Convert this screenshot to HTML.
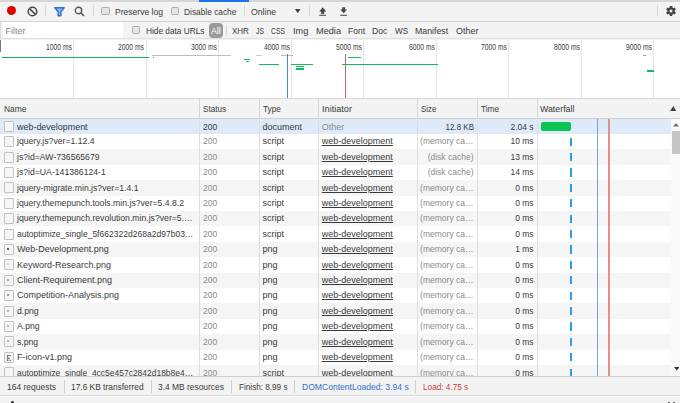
<!DOCTYPE html>
<html><head><meta charset="utf-8"><style>
html,body{margin:0;padding:0;width:680px;height:403px;overflow:hidden;background:#f3f3f3}
body>*{position:absolute}
.t{position:absolute;white-space:nowrap;font-family:"Liberation Sans", sans-serif;}
</style></head><body>
<div style="left:0.00px;top:0.00px;width:680.00px;height:403.00px;background:#f3f3f3;"></div>
<div style="left:0.00px;top:0.00px;width:680.00px;height:1.80px;background:#d6d6d6;"></div>
<div style="left:198.60px;top:0.00px;width:50.80px;height:1.80px;background:#1a73e8;"></div>
<div style="left:0.00px;top:20.50px;width:680.00px;height:1.00px;background:#d3d3d3;"></div>
<div style="left:7.1px;top:6.0px;width:9.2px;height:9.2px;border-radius:50%;background:#e20000"></div>
<svg style="left:27px;top:5.5px" width="11" height="11" viewBox="0 0 11 11"><circle cx="5.5" cy="5.5" r="4.3" fill="none" stroke="#4a4a4a" stroke-width="1.5"/><line x1="2.6" y1="2.6" x2="8.4" y2="8.4" stroke="#4a4a4a" stroke-width="1.5"/></svg>
<div style="left:45.20px;top:5.00px;width:1.00px;height:11.00px;background:#d6d6d6;"></div>
<svg style="left:54px;top:7px" width="11" height="9.5" viewBox="0 0 11 9.5"><path d="M0.8 0.8 H10.2 L6.9 4.7 V8.7 H4.1 V4.7 Z" fill="#86b2f0" stroke="#2f72d6" stroke-width="1.4" stroke-linejoin="round"/></svg>
<svg style="left:74px;top:5.5px" width="11" height="11" viewBox="0 0 11 11"><circle cx="4.5" cy="4.5" r="3.2" fill="none" stroke="#555" stroke-width="1.4"/><line x1="6.8" y1="6.8" x2="10" y2="10" stroke="#555" stroke-width="1.6"/></svg>
<div style="left:93.00px;top:5.00px;width:1.00px;height:11.00px;background:#d6d6d6;"></div>
<div style="left:101.2px;top:6.6px;width:6.5px;height:6.5px;border:1px solid #adadad;border-radius:1.5px;background:#e4e4e4"></div>
<span class="t" style="transform:scaleX(0.9499);left:114.50px;transform-origin:left center;top:5.18px;font-size:9px;line-height:14px;color:#3a3a3a;">Preserve log</span>
<div style="left:170.6px;top:6.6px;width:6.5px;height:6.5px;border:1px solid #adadad;border-radius:1.5px;background:#e4e4e4"></div>
<span class="t" style="transform:scaleX(0.9269);left:183.80px;transform-origin:left center;top:5.18px;font-size:9px;line-height:14px;color:#3a3a3a;">Disable cache</span>
<div style="left:243.50px;top:5.00px;width:1.00px;height:11.00px;background:#d6d6d6;"></div>
<span class="t" style="transform:scaleX(0.9648);left:250.50px;transform-origin:left center;top:5.18px;font-size:9px;line-height:14px;color:#3a3a3a;">Online</span>
<svg style="left:295px;top:8.7px" width="5.5" height="4.3" viewBox="0 0 5.5 4.3"><path d="M0 0 H5.5 L2.75 4.3Z" fill="#444"/></svg>
<div style="left:309.00px;top:5.00px;width:1.00px;height:11.00px;background:#d6d6d6;"></div>
<svg style="left:319px;top:6.5px" width="7.4" height="9.4" viewBox="0 0 7.4 9.4"><path d="M3.7 0.3 L7.2 4.4 H5.2 V6.9 H2.2 V4.4 H0.2 Z" fill="#4a4a4a"/><rect x="0.2" y="7.7" width="7" height="1.4" fill="#6a6a6a"/></svg>
<svg style="left:339.7px;top:6.5px" width="7.4" height="9.4" viewBox="0 0 7.4 9.4"><path d="M2.2 0.3 H5.2 V2.4 H7.2 L3.7 6.2 L0.2 2.4 H2.2 Z" fill="#4a4a4a"/><rect x="0.2" y="7.7" width="7" height="1.4" fill="#6a6a6a"/></svg>
<div style="left:656.90px;top:4.50px;width:1.00px;height:11.50px;background:#d6d6d6;"></div>
<svg style="left:665px;top:5px" width="12" height="12" viewBox="-6 -6 12 12"><g fill="#454545"><circle r="3.7"/><rect x="-1.25" y="-5" width="2.5" height="2.6" rx="0.5" transform="rotate(0)"/><rect x="-1.25" y="-5" width="2.5" height="2.6" rx="0.5" transform="rotate(60)"/><rect x="-1.25" y="-5" width="2.5" height="2.6" rx="0.5" transform="rotate(120)"/><rect x="-1.25" y="-5" width="2.5" height="2.6" rx="0.5" transform="rotate(180)"/><rect x="-1.25" y="-5" width="2.5" height="2.6" rx="0.5" transform="rotate(240)"/><rect x="-1.25" y="-5" width="2.5" height="2.6" rx="0.5" transform="rotate(300)"/></g><circle r="1.5" fill="#f3f3f3"/></svg>
<div style="left:0.00px;top:21.50px;width:680.00px;height:17.20px;background:#f3f3f3;"></div>
<div style="left:3.00px;top:22.00px;width:120.20px;height:16.20px;background:#ffffff;"></div>
<div style="left:0.00px;top:22.00px;width:1.20px;height:16.20px;background:#dcdcdc;"></div>
<span class="t" style="left:5.50px;transform-origin:left center;top:24.28px;font-size:9px;line-height:14px;color:#888;">Filter</span>
<div style="left:131.9px;top:25.6px;width:6.5px;height:6.5px;border:1px solid #adadad;border-radius:1.5px;background:#e4e4e4"></div>
<span class="t" style="transform:scaleX(0.9206);left:145.60px;transform-origin:left center;top:24.28px;font-size:9px;line-height:14px;color:#3a3a3a;">Hide data URLs</span>
<div style="left:226.00px;top:25.00px;width:1.00px;height:10.00px;background:#d6d6d6;"></div>
<span class="t" style="transform:scaleX(0.8887);left:232.10px;transform-origin:left center;top:24.28px;font-size:9px;line-height:14px;color:#3a3a3a;">XHR</span>
<span class="t" style="transform:scaleX(0.7608);left:256.20px;transform-origin:left center;top:24.28px;font-size:9px;line-height:14px;color:#3a3a3a;">JS</span>
<span class="t" style="transform:scaleX(0.7507);left:271.40px;transform-origin:left center;top:24.28px;font-size:9px;line-height:14px;color:#3a3a3a;">CSS</span>
<span class="t" style="transform:scaleX(1.0189);left:292.80px;transform-origin:left center;top:24.28px;font-size:9px;line-height:14px;color:#3a3a3a;">Img</span>
<span class="t" style="transform:scaleX(1.0198);left:316.00px;transform-origin:left center;top:24.28px;font-size:9px;line-height:14px;color:#3a3a3a;">Media</span>
<span class="t" style="transform:scaleX(0.9436);left:348.00px;transform-origin:left center;top:24.28px;font-size:9px;line-height:14px;color:#3a3a3a;">Font</span>
<span class="t" style="transform:scaleX(0.9616);left:372.30px;transform-origin:left center;top:24.28px;font-size:9px;line-height:14px;color:#3a3a3a;">Doc</span>
<span class="t" style="transform:scaleX(0.9103);left:394.80px;transform-origin:left center;top:24.28px;font-size:9px;line-height:14px;color:#3a3a3a;">WS</span>
<span class="t" style="transform:scaleX(0.9731);left:415.40px;transform-origin:left center;top:24.28px;font-size:9px;line-height:14px;color:#3a3a3a;">Manifest</span>
<span class="t" style="transform:scaleX(0.9949);left:455.70px;transform-origin:left center;top:24.28px;font-size:9px;line-height:14px;color:#3a3a3a;">Other</span>
<div style="left:0.00px;top:38.20px;width:680.00px;height:1.30px;background:#dfdfdf;"></div>
<div style="left:209.1px;top:23.2px;width:13.5px;height:15px;border-radius:4px;background:#9a9a9a"></div>
<span class="t" style="transform:scaleX(0.9785);left:211.30px;transform-origin:left center;top:24.08px;font-size:9px;line-height:14px;color:#fff;">All</span>
<div style="left:0.00px;top:39.50px;width:680.00px;height:58.50px;background:#ffffff;"></div>
<div style="left:0.00px;top:39.70px;width:1.20px;height:12.50px;background:#7a7a7a;"></div>
<div style="left:73.10px;top:39.50px;width:1.00px;height:58.50px;background:#e6e6e6;"></div>
<span class="t" style="transform:scaleX(0.7886);right:608.10px;transform-origin:right center;top:40.22px;font-size:8.6px;line-height:14px;color:#3a3a3a;">1000 ms</span>
<div style="left:145.63px;top:39.50px;width:1.00px;height:58.50px;background:#e6e6e6;"></div>
<span class="t" style="transform:scaleX(0.7886);right:535.57px;transform-origin:right center;top:40.22px;font-size:8.6px;line-height:14px;color:#3a3a3a;">2000 ms</span>
<div style="left:218.16px;top:39.50px;width:1.00px;height:58.50px;background:#e6e6e6;"></div>
<span class="t" style="transform:scaleX(0.7886);right:463.04px;transform-origin:right center;top:40.22px;font-size:8.6px;line-height:14px;color:#3a3a3a;">3000 ms</span>
<div style="left:290.69px;top:39.50px;width:1.00px;height:58.50px;background:#e6e6e6;"></div>
<span class="t" style="transform:scaleX(0.7886);right:390.51px;transform-origin:right center;top:40.22px;font-size:8.6px;line-height:14px;color:#3a3a3a;">4000 ms</span>
<div style="left:363.22px;top:39.50px;width:1.00px;height:58.50px;background:#e6e6e6;"></div>
<span class="t" style="transform:scaleX(0.7886);right:317.98px;transform-origin:right center;top:40.22px;font-size:8.6px;line-height:14px;color:#3a3a3a;">5000 ms</span>
<div style="left:435.75px;top:39.50px;width:1.00px;height:58.50px;background:#e6e6e6;"></div>
<span class="t" style="transform:scaleX(0.7886);right:245.45px;transform-origin:right center;top:40.22px;font-size:8.6px;line-height:14px;color:#3a3a3a;">6000 ms</span>
<div style="left:508.28px;top:39.50px;width:1.00px;height:58.50px;background:#e6e6e6;"></div>
<span class="t" style="transform:scaleX(0.7886);right:172.92px;transform-origin:right center;top:40.22px;font-size:8.6px;line-height:14px;color:#3a3a3a;">7000 ms</span>
<div style="left:580.81px;top:39.50px;width:1.00px;height:58.50px;background:#e6e6e6;"></div>
<span class="t" style="transform:scaleX(0.7886);right:100.39px;transform-origin:right center;top:40.22px;font-size:8.6px;line-height:14px;color:#3a3a3a;">8000 ms</span>
<div style="left:653.34px;top:39.50px;width:1.00px;height:58.50px;background:#e6e6e6;"></div>
<span class="t" style="transform:scaleX(0.7886);right:27.86px;transform-origin:right center;top:40.22px;font-size:8.6px;line-height:14px;color:#3a3a3a;">9000 ms</span>
<div style="left:0.00px;top:97.50px;width:680.00px;height:1.00px;background:#d9d9d9;"></div>
<div style="left:1.50px;top:56.95px;width:147.70px;height:1.50px;background:#1fa85c;"></div>
<div style="left:152.00px;top:55.00px;width:79.30px;height:1.00px;background:#bdbdbd;"></div>
<div style="left:256.00px;top:55.10px;width:5.50px;height:0.80px;background:#c9c9c9;"></div>
<div style="left:281.30px;top:55.00px;width:12.00px;height:1.00px;background:#bdbdbd;"></div>
<div style="left:152.50px;top:56.90px;width:1.50px;height:1.20px;background:#3a8fd8;"></div>
<div style="left:243.70px;top:59.10px;width:6.40px;height:1.40px;background:#0dbd5a;"></div>
<div style="left:245.50px;top:61.30px;width:3.50px;height:1.20px;background:#0dbd5a;"></div>
<div style="left:258.80px;top:63.80px;width:19.90px;height:1.60px;background:#0dbd5a;"></div>
<div style="left:291.30px;top:63.80px;width:21.80px;height:1.60px;background:#0dbd5a;"></div>
<div style="left:296.40px;top:65.60px;width:8.00px;height:1.40px;background:#0dbd5a;"></div>
<div style="left:296.40px;top:68.20px;width:8.00px;height:1.40px;background:#0dbd5a;"></div>
<div style="left:342.40px;top:63.80px;width:95.70px;height:1.60px;background:#0dbd5a;"></div>
<div style="left:347.60px;top:56.60px;width:13.00px;height:1.60px;background:#0dbd5a;"></div>
<div style="left:643.00px;top:55.10px;width:2.50px;height:0.80px;background:#999;"></div>
<div style="left:647.00px;top:70.05px;width:7.30px;height:1.90px;background:#0dbd5a;"></div>
<div style="left:286.70px;top:54.30px;width:1.20px;height:43.70px;background:#4a86d8;"></div>
<div style="left:345.20px;top:54.30px;width:1.20px;height:43.70px;background:#b36a6a;"></div>
<div style="left:0.00px;top:98.50px;width:680.00px;height:19.70px;background:#f3f3f3;"></div>
<div style="left:0.00px;top:118.00px;width:680.00px;height:1.00px;background:#cfcfcf;"></div>
<div style="left:198.80px;top:98.50px;width:1.00px;height:278.00px;background:#d6d6d6;"></div>
<div style="left:259.00px;top:98.50px;width:1.00px;height:278.00px;background:#d6d6d6;"></div>
<div style="left:318.30px;top:98.50px;width:1.00px;height:278.00px;background:#d6d6d6;"></div>
<div style="left:417.20px;top:98.50px;width:1.00px;height:278.00px;background:#d6d6d6;"></div>
<div style="left:477.30px;top:98.50px;width:1.00px;height:278.00px;background:#d6d6d6;"></div>
<div style="left:536.50px;top:98.50px;width:1.00px;height:278.00px;background:#d6d6d6;"></div>
<span class="t" style="transform:scaleX(0.9369);left:3.60px;transform-origin:left center;top:102.18px;font-size:9px;line-height:14px;color:#3a3a3a;">Name</span>
<span class="t" style="transform:scaleX(0.9053);left:202.80px;transform-origin:left center;top:102.18px;font-size:9px;line-height:14px;color:#3a3a3a;">Status</span>
<span class="t" style="transform:scaleX(0.9172);left:262.80px;transform-origin:left center;top:102.18px;font-size:9px;line-height:14px;color:#3a3a3a;">Type</span>
<span class="t" style="transform:scaleX(1.0164);left:322.00px;transform-origin:left center;top:102.18px;font-size:9px;line-height:14px;color:#3a3a3a;">Initiator</span>
<span class="t" style="transform:scaleX(0.8735);left:421.20px;transform-origin:left center;top:102.18px;font-size:9px;line-height:14px;color:#3a3a3a;">Size</span>
<span class="t" style="transform:scaleX(0.9201);left:480.70px;transform-origin:left center;top:102.18px;font-size:9px;line-height:14px;color:#3a3a3a;">Time</span>
<span class="t" style="transform:scaleX(0.9776);left:539.90px;transform-origin:left center;top:102.18px;font-size:9px;line-height:14px;color:#3a3a3a;">Waterfall</span>
<svg style="left:669.8px;top:106px" width="6.5" height="5.2" viewBox="0 0 6.5 5.2"><path d="M0 5.2 L3.25 0 L6.5 5.2Z" fill="#444"/></svg>
<div style="left:0.00px;top:118.50px;width:671.00px;height:15.40px;background:#dfeaf9;"></div>
<div style="left:0.00px;top:133.90px;width:671.00px;height:15.41px;background:#ffffff;"></div>
<div style="left:0.00px;top:149.31px;width:671.00px;height:15.41px;background:#f5f5f5;"></div>
<div style="left:0.00px;top:164.72px;width:671.00px;height:15.41px;background:#ffffff;"></div>
<div style="left:0.00px;top:180.13px;width:671.00px;height:15.41px;background:#f5f5f5;"></div>
<div style="left:0.00px;top:195.54px;width:671.00px;height:15.41px;background:#ffffff;"></div>
<div style="left:0.00px;top:210.95px;width:671.00px;height:15.41px;background:#f5f5f5;"></div>
<div style="left:0.00px;top:226.36px;width:671.00px;height:15.41px;background:#ffffff;"></div>
<div style="left:0.00px;top:241.77px;width:671.00px;height:15.41px;background:#f5f5f5;"></div>
<div style="left:0.00px;top:257.18px;width:671.00px;height:15.41px;background:#ffffff;"></div>
<div style="left:0.00px;top:272.59px;width:671.00px;height:15.41px;background:#f5f5f5;"></div>
<div style="left:0.00px;top:288.00px;width:671.00px;height:15.41px;background:#ffffff;"></div>
<div style="left:0.00px;top:303.41px;width:671.00px;height:15.41px;background:#f5f5f5;"></div>
<div style="left:0.00px;top:318.82px;width:671.00px;height:15.41px;background:#ffffff;"></div>
<div style="left:0.00px;top:334.23px;width:671.00px;height:15.41px;background:#f5f5f5;"></div>
<div style="left:0.00px;top:349.64px;width:671.00px;height:15.41px;background:#ffffff;"></div>
<div style="left:0.00px;top:365.05px;width:671.00px;height:10.95px;background:#f5f5f5;"></div>
<div style="left:198.80px;top:119.00px;width:1.00px;height:257.50px;background:#dedede;"></div>
<div style="left:259.00px;top:119.00px;width:1.00px;height:257.50px;background:#dedede;"></div>
<div style="left:318.30px;top:119.00px;width:1.00px;height:257.50px;background:#dedede;"></div>
<div style="left:417.20px;top:119.00px;width:1.00px;height:257.50px;background:#dedede;"></div>
<div style="left:477.30px;top:119.00px;width:1.00px;height:257.50px;background:#dedede;"></div>
<div style="left:536.50px;top:119.00px;width:1.00px;height:257.50px;background:#dedede;"></div>
<div style="left:4.2px;top:120.70px;width:7.4px;height:9px;border:1px solid #c2c2c2;border-radius:1px;background:#f6f6f6"></div>
<span class="t" style="transform:scaleX(0.9937);left:16.90px;transform-origin:left center;top:119.88px;font-size:9px;line-height:14px;color:#303942;">web-development</span>
<span class="t" style="left:202.60px;transform-origin:left center;top:119.88px;font-size:9px;line-height:14px;color:#3a3a3a;transform:scaleX(0.945);">200</span>
<span class="t" style="left:262.50px;transform-origin:left center;top:119.88px;font-size:9px;line-height:14px;color:#3a3a3a;">document</span>
<span class="t" style="left:321.80px;transform-origin:left center;top:119.88px;font-size:9px;line-height:14px;color:#8b8b8b;">Other</span>
<span class="t" style="right:206.00px;transform-origin:right center;top:119.88px;font-size:9px;line-height:14px;color:#3a3a3a;transform:scaleX(0.89);">12.8 KB</span>
<span class="t" style="right:146.80px;transform-origin:right center;top:119.88px;font-size:9px;line-height:14px;color:#3a3a3a;transform:scaleX(0.94);">2.04 s</span>
<div style="left:4.2px;top:136.10px;width:7.4px;height:9px;border:1px solid #c2c2c2;border-radius:1px;background:#f6f6f6"></div>
<span class="t" style="left:16.90px;transform-origin:left center;top:134.38px;font-size:9px;line-height:14px;color:#3a3a3a;transform:scaleX(0.962);">jquery.js?ver=1.12.4</span>
<span class="t" style="left:202.60px;transform-origin:left center;top:134.38px;font-size:9px;line-height:14px;color:#8b8b8b;transform:scaleX(0.945);">200</span>
<span class="t" style="left:262.50px;transform-origin:left center;top:134.38px;font-size:9px;line-height:14px;color:#3a3a3a;">script</span>
<span class="t" style="left:321.80px;transform-origin:left center;top:134.38px;font-size:9px;line-height:14px;color:#3a3a3a;text-decoration:underline;">web-development</span>
<span class="t" style="right:206.00px;transform-origin:right center;top:134.38px;font-size:9px;line-height:14px;color:#8b8b8b;transform:scaleX(0.945);">(memory ca…</span>
<span class="t" style="right:146.80px;transform-origin:right center;top:134.38px;font-size:9px;line-height:14px;color:#3a3a3a;transform:scaleX(0.94);">10 ms</span>
<div style="left:569.90px;top:137.51px;width:1.70px;height:8.20px;background:#2a9fe6;"></div>
<div style="left:4.2px;top:151.51px;width:7.4px;height:9px;border:1px solid #c2c2c2;border-radius:1px;background:#f6f6f6"></div>
<span class="t" style="left:16.90px;transform-origin:left center;top:149.79px;font-size:9px;line-height:14px;color:#3a3a3a;transform:scaleX(0.962);">js?id=AW-736565679</span>
<span class="t" style="left:202.60px;transform-origin:left center;top:149.79px;font-size:9px;line-height:14px;color:#8b8b8b;transform:scaleX(0.945);">200</span>
<span class="t" style="left:262.50px;transform-origin:left center;top:149.79px;font-size:9px;line-height:14px;color:#3a3a3a;">script</span>
<span class="t" style="left:321.80px;transform-origin:left center;top:149.79px;font-size:9px;line-height:14px;color:#3a3a3a;text-decoration:underline;">web-development</span>
<span class="t" style="right:206.00px;transform-origin:right center;top:149.79px;font-size:9px;line-height:14px;color:#8b8b8b;transform:scaleX(0.945);">(disk cache)</span>
<span class="t" style="right:146.80px;transform-origin:right center;top:149.79px;font-size:9px;line-height:14px;color:#3a3a3a;transform:scaleX(0.94);">13 ms</span>
<div style="left:569.90px;top:152.91px;width:1.70px;height:8.20px;background:#2a9fe6;"></div>
<div style="left:4.2px;top:166.92px;width:7.4px;height:9px;border:1px solid #c2c2c2;border-radius:1px;background:#f6f6f6"></div>
<span class="t" style="left:16.90px;transform-origin:left center;top:165.20px;font-size:9px;line-height:14px;color:#3a3a3a;transform:scaleX(0.962);">js?id=UA-141386124-1</span>
<span class="t" style="left:202.60px;transform-origin:left center;top:165.20px;font-size:9px;line-height:14px;color:#8b8b8b;transform:scaleX(0.945);">200</span>
<span class="t" style="left:262.50px;transform-origin:left center;top:165.20px;font-size:9px;line-height:14px;color:#3a3a3a;">script</span>
<span class="t" style="left:321.80px;transform-origin:left center;top:165.20px;font-size:9px;line-height:14px;color:#3a3a3a;text-decoration:underline;">web-development</span>
<span class="t" style="right:206.00px;transform-origin:right center;top:165.20px;font-size:9px;line-height:14px;color:#8b8b8b;transform:scaleX(0.945);">(disk cache)</span>
<span class="t" style="right:146.80px;transform-origin:right center;top:165.20px;font-size:9px;line-height:14px;color:#3a3a3a;transform:scaleX(0.94);">14 ms</span>
<div style="left:569.90px;top:168.33px;width:1.70px;height:8.20px;background:#2a9fe6;"></div>
<div style="left:4.2px;top:182.33px;width:7.4px;height:9px;border:1px solid #c2c2c2;border-radius:1px;background:#f6f6f6"></div>
<span class="t" style="left:16.90px;transform-origin:left center;top:180.61px;font-size:9px;line-height:14px;color:#3a3a3a;transform:scaleX(0.962);">jquery-migrate.min.js?ver=1.4.1</span>
<span class="t" style="left:202.60px;transform-origin:left center;top:180.61px;font-size:9px;line-height:14px;color:#8b8b8b;transform:scaleX(0.945);">200</span>
<span class="t" style="left:262.50px;transform-origin:left center;top:180.61px;font-size:9px;line-height:14px;color:#3a3a3a;">script</span>
<span class="t" style="left:321.80px;transform-origin:left center;top:180.61px;font-size:9px;line-height:14px;color:#3a3a3a;text-decoration:underline;">web-development</span>
<span class="t" style="right:206.00px;transform-origin:right center;top:180.61px;font-size:9px;line-height:14px;color:#8b8b8b;transform:scaleX(0.945);">(memory ca…</span>
<span class="t" style="right:146.80px;transform-origin:right center;top:180.61px;font-size:9px;line-height:14px;color:#3a3a3a;transform:scaleX(0.94);">0 ms</span>
<div style="left:569.90px;top:183.74px;width:1.70px;height:8.20px;background:#2a9fe6;"></div>
<div style="left:4.2px;top:197.74px;width:7.4px;height:9px;border:1px solid #c2c2c2;border-radius:1px;background:#f6f6f6"></div>
<span class="t" style="left:16.90px;transform-origin:left center;top:196.02px;font-size:9px;line-height:14px;color:#3a3a3a;transform:scaleX(0.962);">jquery.themepunch.tools.min.js?ver=5.4.8.2</span>
<span class="t" style="left:202.60px;transform-origin:left center;top:196.02px;font-size:9px;line-height:14px;color:#8b8b8b;transform:scaleX(0.945);">200</span>
<span class="t" style="left:262.50px;transform-origin:left center;top:196.02px;font-size:9px;line-height:14px;color:#3a3a3a;">script</span>
<span class="t" style="left:321.80px;transform-origin:left center;top:196.02px;font-size:9px;line-height:14px;color:#3a3a3a;text-decoration:underline;">web-development</span>
<span class="t" style="right:206.00px;transform-origin:right center;top:196.02px;font-size:9px;line-height:14px;color:#8b8b8b;transform:scaleX(0.945);">(memory ca…</span>
<span class="t" style="right:146.80px;transform-origin:right center;top:196.02px;font-size:9px;line-height:14px;color:#3a3a3a;transform:scaleX(0.94);">0 ms</span>
<div style="left:569.90px;top:199.15px;width:1.70px;height:8.20px;background:#2a9fe6;"></div>
<div style="left:4.2px;top:213.15px;width:7.4px;height:9px;border:1px solid #c2c2c2;border-radius:1px;background:#f6f6f6"></div>
<span class="t" style="transform:scaleX(0.9618);left:16.90px;transform-origin:left center;top:211.43px;font-size:9px;line-height:14px;color:#3a3a3a;">jquery.themepunch.revolution.min.js?ver=5.…</span>
<span class="t" style="left:202.60px;transform-origin:left center;top:211.43px;font-size:9px;line-height:14px;color:#8b8b8b;transform:scaleX(0.945);">200</span>
<span class="t" style="left:262.50px;transform-origin:left center;top:211.43px;font-size:9px;line-height:14px;color:#3a3a3a;">script</span>
<span class="t" style="left:321.80px;transform-origin:left center;top:211.43px;font-size:9px;line-height:14px;color:#3a3a3a;text-decoration:underline;">web-development</span>
<span class="t" style="right:206.00px;transform-origin:right center;top:211.43px;font-size:9px;line-height:14px;color:#8b8b8b;transform:scaleX(0.945);">(memory ca…</span>
<span class="t" style="right:146.80px;transform-origin:right center;top:211.43px;font-size:9px;line-height:14px;color:#3a3a3a;transform:scaleX(0.94);">0 ms</span>
<div style="left:569.90px;top:214.56px;width:1.70px;height:8.20px;background:#2a9fe6;"></div>
<div style="left:4.2px;top:228.56px;width:7.4px;height:9px;border:1px solid #c2c2c2;border-radius:1px;background:#f6f6f6"></div>
<span class="t" style="transform:scaleX(0.9476);left:16.90px;transform-origin:left center;top:226.84px;font-size:9px;line-height:14px;color:#3a3a3a;">autoptimize_single_5f662322d268a2d97b03…</span>
<span class="t" style="left:202.60px;transform-origin:left center;top:226.84px;font-size:9px;line-height:14px;color:#8b8b8b;transform:scaleX(0.945);">200</span>
<span class="t" style="left:262.50px;transform-origin:left center;top:226.84px;font-size:9px;line-height:14px;color:#3a3a3a;">script</span>
<span class="t" style="left:321.80px;transform-origin:left center;top:226.84px;font-size:9px;line-height:14px;color:#3a3a3a;text-decoration:underline;">web-development</span>
<span class="t" style="right:206.00px;transform-origin:right center;top:226.84px;font-size:9px;line-height:14px;color:#8b8b8b;transform:scaleX(0.945);">(memory ca…</span>
<span class="t" style="right:146.80px;transform-origin:right center;top:226.84px;font-size:9px;line-height:14px;color:#3a3a3a;transform:scaleX(0.94);">0 ms</span>
<div style="left:569.90px;top:229.97px;width:1.70px;height:8.20px;background:#2a9fe6;"></div>
<div style="left:4.2px;top:243.97px;width:7.4px;height:9px;border:1px solid #c2c2c2;border-radius:1px;background:#f6f6f6"></div>
<div style="left:7.40px;top:247.97px;width:2.00px;height:2.00px;background:#3d6590;"></div>
<span class="t" style="left:16.90px;transform-origin:left center;top:242.25px;font-size:9px;line-height:14px;color:#3a3a3a;transform:scaleX(1.0);">Web-Development.png</span>
<span class="t" style="left:202.60px;transform-origin:left center;top:242.25px;font-size:9px;line-height:14px;color:#8b8b8b;transform:scaleX(0.945);">200</span>
<span class="t" style="left:262.50px;transform-origin:left center;top:242.25px;font-size:9px;line-height:14px;color:#3a3a3a;">png</span>
<span class="t" style="left:321.80px;transform-origin:left center;top:242.25px;font-size:9px;line-height:14px;color:#3a3a3a;text-decoration:underline;">web-development</span>
<span class="t" style="right:206.00px;transform-origin:right center;top:242.25px;font-size:9px;line-height:14px;color:#8b8b8b;transform:scaleX(0.945);">(memory ca…</span>
<span class="t" style="right:146.80px;transform-origin:right center;top:242.25px;font-size:9px;line-height:14px;color:#3a3a3a;transform:scaleX(0.94);">1 ms</span>
<div style="left:569.90px;top:245.38px;width:1.70px;height:8.20px;background:#2a9fe6;"></div>
<div style="left:4.2px;top:259.38px;width:7.4px;height:9px;border:1px solid #c2c2c2;border-radius:1px;background:#f6f6f6"></div>
<div style="left:7.40px;top:263.38px;width:2.00px;height:2.00px;background:#d4d4d4;"></div>
<span class="t" style="left:16.90px;transform-origin:left center;top:257.66px;font-size:9px;line-height:14px;color:#3a3a3a;transform:scaleX(1.0);">Keyword-Research.png</span>
<span class="t" style="left:202.60px;transform-origin:left center;top:257.66px;font-size:9px;line-height:14px;color:#8b8b8b;transform:scaleX(0.945);">200</span>
<span class="t" style="left:262.50px;transform-origin:left center;top:257.66px;font-size:9px;line-height:14px;color:#3a3a3a;">png</span>
<span class="t" style="left:321.80px;transform-origin:left center;top:257.66px;font-size:9px;line-height:14px;color:#3a3a3a;text-decoration:underline;">web-development</span>
<span class="t" style="right:206.00px;transform-origin:right center;top:257.66px;font-size:9px;line-height:14px;color:#8b8b8b;transform:scaleX(0.945);">(memory ca…</span>
<span class="t" style="right:146.80px;transform-origin:right center;top:257.66px;font-size:9px;line-height:14px;color:#3a3a3a;transform:scaleX(0.94);">0 ms</span>
<div style="left:569.90px;top:260.78px;width:1.70px;height:8.20px;background:#2a9fe6;"></div>
<div style="left:4.2px;top:274.79px;width:7.4px;height:9px;border:1px solid #c2c2c2;border-radius:1px;background:#f6f6f6"></div>
<div style="left:7.40px;top:278.79px;width:2.00px;height:2.00px;background:#a3a38c;"></div>
<span class="t" style="left:16.90px;transform-origin:left center;top:273.07px;font-size:9px;line-height:14px;color:#3a3a3a;transform:scaleX(1.0);">Client-Requirement.png</span>
<span class="t" style="left:202.60px;transform-origin:left center;top:273.07px;font-size:9px;line-height:14px;color:#8b8b8b;transform:scaleX(0.945);">200</span>
<span class="t" style="left:262.50px;transform-origin:left center;top:273.07px;font-size:9px;line-height:14px;color:#3a3a3a;">png</span>
<span class="t" style="left:321.80px;transform-origin:left center;top:273.07px;font-size:9px;line-height:14px;color:#3a3a3a;text-decoration:underline;">web-development</span>
<span class="t" style="right:206.00px;transform-origin:right center;top:273.07px;font-size:9px;line-height:14px;color:#8b8b8b;transform:scaleX(0.945);">(memory ca…</span>
<span class="t" style="right:146.80px;transform-origin:right center;top:273.07px;font-size:9px;line-height:14px;color:#3a3a3a;transform:scaleX(0.94);">0 ms</span>
<div style="left:569.90px;top:276.19px;width:1.70px;height:8.20px;background:#2a9fe6;"></div>
<div style="left:4.2px;top:290.20px;width:7.4px;height:9px;border:1px solid #c2c2c2;border-radius:1px;background:#f6f6f6"></div>
<div style="left:7.40px;top:294.20px;width:2.00px;height:2.00px;background:#a0a0a0;"></div>
<span class="t" style="left:16.90px;transform-origin:left center;top:288.48px;font-size:9px;line-height:14px;color:#3a3a3a;transform:scaleX(1.0);">Competition-Analysis.png</span>
<span class="t" style="left:202.60px;transform-origin:left center;top:288.48px;font-size:9px;line-height:14px;color:#8b8b8b;transform:scaleX(0.945);">200</span>
<span class="t" style="left:262.50px;transform-origin:left center;top:288.48px;font-size:9px;line-height:14px;color:#3a3a3a;">png</span>
<span class="t" style="left:321.80px;transform-origin:left center;top:288.48px;font-size:9px;line-height:14px;color:#3a3a3a;text-decoration:underline;">web-development</span>
<span class="t" style="right:206.00px;transform-origin:right center;top:288.48px;font-size:9px;line-height:14px;color:#8b8b8b;transform:scaleX(0.945);">(memory ca…</span>
<span class="t" style="right:146.80px;transform-origin:right center;top:288.48px;font-size:9px;line-height:14px;color:#3a3a3a;transform:scaleX(0.94);">0 ms</span>
<div style="left:569.90px;top:291.60px;width:1.70px;height:8.20px;background:#2a9fe6;"></div>
<div style="left:4.2px;top:305.61px;width:7.4px;height:9px;border:1px solid #c2c2c2;border-radius:1px;background:#f6f6f6"></div>
<div style="left:7.40px;top:309.61px;width:2.00px;height:2.00px;background:#b0b0b0;"></div>
<span class="t" style="left:16.90px;transform-origin:left center;top:303.89px;font-size:9px;line-height:14px;color:#3a3a3a;transform:scaleX(0.962);">d.png</span>
<span class="t" style="left:202.60px;transform-origin:left center;top:303.89px;font-size:9px;line-height:14px;color:#8b8b8b;transform:scaleX(0.945);">200</span>
<span class="t" style="left:262.50px;transform-origin:left center;top:303.89px;font-size:9px;line-height:14px;color:#3a3a3a;">png</span>
<span class="t" style="left:321.80px;transform-origin:left center;top:303.89px;font-size:9px;line-height:14px;color:#3a3a3a;text-decoration:underline;">web-development</span>
<span class="t" style="right:206.00px;transform-origin:right center;top:303.89px;font-size:9px;line-height:14px;color:#8b8b8b;transform:scaleX(0.945);">(memory ca…</span>
<span class="t" style="right:146.80px;transform-origin:right center;top:303.89px;font-size:9px;line-height:14px;color:#3a3a3a;transform:scaleX(0.94);">0 ms</span>
<div style="left:569.90px;top:307.01px;width:1.70px;height:8.20px;background:#2a9fe6;"></div>
<div style="left:4.2px;top:321.02px;width:7.4px;height:9px;border:1px solid #c2c2c2;border-radius:1px;background:#f6f6f6"></div>
<div style="left:7.40px;top:325.02px;width:2.00px;height:2.00px;background:#b0b0b0;"></div>
<span class="t" style="left:16.90px;transform-origin:left center;top:319.30px;font-size:9px;line-height:14px;color:#3a3a3a;transform:scaleX(0.962);">A.png</span>
<span class="t" style="left:202.60px;transform-origin:left center;top:319.30px;font-size:9px;line-height:14px;color:#8b8b8b;transform:scaleX(0.945);">200</span>
<span class="t" style="left:262.50px;transform-origin:left center;top:319.30px;font-size:9px;line-height:14px;color:#3a3a3a;">png</span>
<span class="t" style="left:321.80px;transform-origin:left center;top:319.30px;font-size:9px;line-height:14px;color:#3a3a3a;text-decoration:underline;">web-development</span>
<span class="t" style="right:206.00px;transform-origin:right center;top:319.30px;font-size:9px;line-height:14px;color:#8b8b8b;transform:scaleX(0.945);">(memory ca…</span>
<span class="t" style="right:146.80px;transform-origin:right center;top:319.30px;font-size:9px;line-height:14px;color:#3a3a3a;transform:scaleX(0.94);">0 ms</span>
<div style="left:569.90px;top:322.43px;width:1.70px;height:8.20px;background:#2a9fe6;"></div>
<div style="left:4.2px;top:336.43px;width:7.4px;height:9px;border:1px solid #c2c2c2;border-radius:1px;background:#f6f6f6"></div>
<div style="left:7.40px;top:340.43px;width:2.00px;height:2.00px;background:#b0b0b0;"></div>
<span class="t" style="left:16.90px;transform-origin:left center;top:334.71px;font-size:9px;line-height:14px;color:#3a3a3a;transform:scaleX(0.962);">s.png</span>
<span class="t" style="left:202.60px;transform-origin:left center;top:334.71px;font-size:9px;line-height:14px;color:#8b8b8b;transform:scaleX(0.945);">200</span>
<span class="t" style="left:262.50px;transform-origin:left center;top:334.71px;font-size:9px;line-height:14px;color:#3a3a3a;">png</span>
<span class="t" style="left:321.80px;transform-origin:left center;top:334.71px;font-size:9px;line-height:14px;color:#3a3a3a;text-decoration:underline;">web-development</span>
<span class="t" style="right:206.00px;transform-origin:right center;top:334.71px;font-size:9px;line-height:14px;color:#8b8b8b;transform:scaleX(0.945);">(memory ca…</span>
<span class="t" style="right:146.80px;transform-origin:right center;top:334.71px;font-size:9px;line-height:14px;color:#3a3a3a;transform:scaleX(0.94);">0 ms</span>
<div style="left:569.90px;top:337.83px;width:1.70px;height:8.20px;background:#2a9fe6;"></div>
<div style="left:4.2px;top:351.84px;width:7.4px;height:9px;border:1px solid #c2c2c2;border-radius:1px;background:#f6f6f6"></div>
<span class="t" style="left:6.3px;top:352.24px;font-family:'Liberation Serif',serif;font-size:8.5px;line-height:12px;color:#444">E</span>
<span class="t" style="left:16.90px;transform-origin:left center;top:350.12px;font-size:9px;line-height:14px;color:#3a3a3a;transform:scaleX(1.0);">F-icon-v1.png</span>
<span class="t" style="left:202.60px;transform-origin:left center;top:350.12px;font-size:9px;line-height:14px;color:#8b8b8b;transform:scaleX(0.945);">200</span>
<span class="t" style="left:262.50px;transform-origin:left center;top:350.12px;font-size:9px;line-height:14px;color:#3a3a3a;">png</span>
<span class="t" style="left:321.80px;transform-origin:left center;top:350.12px;font-size:9px;line-height:14px;color:#3a3a3a;text-decoration:underline;">web-development</span>
<span class="t" style="right:206.00px;transform-origin:right center;top:350.12px;font-size:9px;line-height:14px;color:#8b8b8b;transform:scaleX(0.945);">(memory ca…</span>
<span class="t" style="right:146.80px;transform-origin:right center;top:350.12px;font-size:9px;line-height:14px;color:#3a3a3a;transform:scaleX(0.94);">0 ms</span>
<div style="left:569.90px;top:353.25px;width:1.70px;height:8.20px;background:#2a9fe6;"></div>
<div style="left:4.2px;top:367.25px;width:7.4px;height:9px;border:1px solid #c2c2c2;border-radius:1px;background:#f6f6f6"></div>
<span class="t" style="transform:scaleX(0.9415);left:16.90px;transform-origin:left center;top:365.53px;font-size:9px;line-height:14px;color:#3a3a3a;">autoptimize_single_4cc5e457c2842d18b8e4…</span>
<span class="t" style="left:202.60px;transform-origin:left center;top:365.53px;font-size:9px;line-height:14px;color:#8b8b8b;transform:scaleX(0.945);">200</span>
<span class="t" style="left:262.50px;transform-origin:left center;top:365.53px;font-size:9px;line-height:14px;color:#3a3a3a;">script</span>
<span class="t" style="left:321.80px;transform-origin:left center;top:365.53px;font-size:9px;line-height:14px;color:#3a3a3a;text-decoration:underline;">web-development</span>
<span class="t" style="right:206.00px;transform-origin:right center;top:365.53px;font-size:9px;line-height:14px;color:#8b8b8b;transform:scaleX(0.945);">(memory ca…</span>
<span class="t" style="right:146.80px;transform-origin:right center;top:365.53px;font-size:9px;line-height:14px;color:#3a3a3a;transform:scaleX(0.94);">0 ms</span>
<div style="left:569.90px;top:368.65px;width:1.70px;height:8.20px;background:#2a9fe6;"></div>
<div style="left:540.5px;top:121.8px;width:30.2px;height:9.3px;border-radius:2px;background:#0bc454"></div>
<div style="left:596.50px;top:118.50px;width:1.40px;height:257.50px;background:#76a3df;"></div>
<div style="left:608.30px;top:118.50px;width:1.40px;height:257.50px;background:#de9090;"></div>
<div style="left:670.50px;top:118.50px;width:9.50px;height:257.50px;background:#f9f9f9;"></div>
<svg style="left:672.8px;top:123.3px" width="6" height="3.6" viewBox="0 0 6 3.6"><path d="M0 3.6 L3 0 L6 3.6Z" fill="#707070"/></svg>
<div style="left:672.00px;top:131.30px;width:8.00px;height:23.00px;background:#c6c6c6;"></div>
<svg style="left:673.8px;top:367.3px" width="5.5" height="3.6" viewBox="0 0 5.5 3.6"><path d="M0 0 L2.75 3.6 L5.5 0Z" fill="#333"/></svg>
<div style="left:0.00px;top:376.00px;width:680.00px;height:1.00px;background:#cfcfcf;"></div>
<div style="left:0.00px;top:377.00px;width:680.00px;height:18.00px;background:#f3f3f3;"></div>
<span class="t" style="transform:scaleX(0.9434);left:7.40px;transform-origin:left center;top:380.18px;font-size:9px;line-height:14px;color:#3a3a3a;">164 requests</span>
<span class="t" style="transform:scaleX(0.9302);left:71.20px;transform-origin:left center;top:380.18px;font-size:9px;line-height:14px;color:#3a3a3a;">17.6 KB transferred</span>
<span class="t" style="transform:scaleX(0.9343);left:158.30px;transform-origin:left center;top:380.18px;font-size:9px;line-height:14px;color:#3a3a3a;">3.4 MB resources</span>
<span class="t" style="transform:scaleX(0.9060);left:238.50px;transform-origin:left center;top:380.18px;font-size:9px;line-height:14px;color:#3a3a3a;">Finish: 8.99 s</span>
<span class="t" style="transform:scaleX(0.9520);left:301.60px;transform-origin:left center;top:380.18px;font-size:9px;line-height:14px;color:#2f72cc;">DOMContentLoaded: 3.94 s</span>
<span class="t" style="transform:scaleX(0.9123);left:422.80px;transform-origin:left center;top:380.18px;font-size:9px;line-height:14px;color:#c83a3a;">Load: 4.75 s</span>
<div style="left:63.70px;top:380.00px;width:1.00px;height:13.00px;background:#d0d0d0;"></div>
<div style="left:151.10px;top:380.00px;width:1.00px;height:13.00px;background:#d0d0d0;"></div>
<div style="left:230.50px;top:380.00px;width:1.00px;height:13.00px;background:#d0d0d0;"></div>
<div style="left:294.20px;top:380.00px;width:1.00px;height:13.00px;background:#d0d0d0;"></div>
<div style="left:414.90px;top:380.00px;width:1.00px;height:13.00px;background:#d0d0d0;"></div>
<div style="left:0.00px;top:395.00px;width:680.00px;height:1.00px;background:#d9d9d9;"></div>
<div style="left:0.00px;top:396.00px;width:680.00px;height:1.00px;background:#fafafa;"></div>
<div style="left:0.00px;top:397.00px;width:680.00px;height:6.00px;background:#f3f3f3;"></div>
<div style="left:667.80px;top:401.60px;width:1.80px;height:1.40px;background:#555;"></div>
<div style="left:673.00px;top:401.60px;width:1.80px;height:1.40px;background:#555;"></div>
<div style="left:10.8px;top:401.2px;width:2.8px;height:4px;border-radius:1.4px;background:#3a3a3a"></div>
</body></html>
